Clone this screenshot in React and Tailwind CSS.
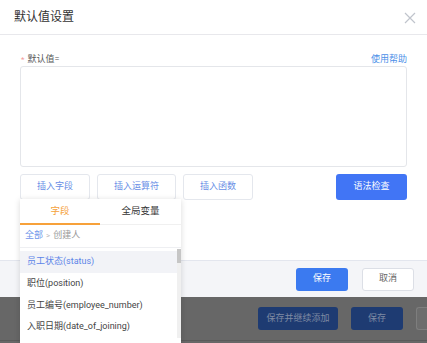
export default function App() {
  const font = { fontFamily: 'Roboto, "Noto Sans CJK SC", sans-serif' };
  return (
    <div className="relative w-[427px] h-[343px] overflow-hidden bg-white text-[9px] whitespace-nowrap" style={font}>
      {/* header */}
      <div className="h-[35px] flex items-center justify-between pl-[14px] pr-[11px] border-b border-[#e8e8ec]">
        <div className="text-[12px] text-[#333] leading-none">默认值设置</div>
        <svg width="12" height="12" viewBox="0 0 12 12" className="mt-[1px]">
          <path d="M1 1 L11 11 M11 1 L1 11" stroke="#c0c4cc" strokeWidth="1.2" />
        </svg>
      </div>
      {/* body */}
      <div className="h-[225px] px-[20px] pt-[16px]">
        <div className="flex items-end justify-between h-[13px] leading-none">
          <div className="flex items-center">
            <span className="text-[#f59a9a] text-[8px] mr-[3px] ml-[1px]">*</span>
            <span className="text-[#555]">默认值=</span>
          </div>
          <span className="text-[#4b8fe8]">使用帮助</span>
        </div>
        <div className="mt-[2px] h-[101px] border border-[#e4e6ea] rounded-[3px]"></div>
        <div className="mt-[7px] flex items-center">
          <div className="w-[70px] h-[26px] border border-[#e4e7ed] rounded-[3px] flex items-center justify-center text-[#6a8fe6]">插入字段</div>
          <div className="ml-[7px] w-[79px] h-[26px] border border-[#e4e7ed] rounded-[3px] flex items-center justify-center text-[#6a8fe6]">插入运算符</div>
          <div className="ml-[7px] w-[70px] h-[26px] border border-[#e4e7ed] rounded-[3px] flex items-center justify-center text-[#6a8fe6]">插入函数</div>
          <div className="ml-auto w-[71px] h-[26px] bg-[#4175f5] rounded-[3px] flex items-center justify-center text-white">语法检查</div>
        </div>
      </div>
      {/* footer */}
      <div className="h-[37px] bg-[#f4f5f8] border-t border-[#e3e6ee] flex items-center justify-end pr-[13px] gap-[14px]">
        <div className="w-[52px] h-[23px] bg-[#3b7af0] rounded-[3px] flex items-center justify-center text-white">保存</div>
        <div className="w-[52px] h-[23px] bg-white border border-[#dcdfe6] rounded-[3px] flex items-center justify-center text-[#666]">取消</div>
      </div>
      {/* overlay area */}
      <div className="h-[46px] bg-[#676767] flex flex-col">
        <div className="flex-1 flex items-center justify-end gap-[13px]">
          <div className="w-[80px] h-[23px] bg-[#1e3b72] rounded-[3px] flex items-center justify-center text-[#7e8aa3]">保存并继续添加</div>
          <div className="w-[52px] h-[23px] bg-[#1e3b72] rounded-[3px] flex items-center justify-center text-[#7e8aa3]">保存</div>
          <div className="w-[11px] h-[23px] bg-[#6d6d6d] border border-[#7e7e7e] rounded-l-[3px] border-r-0"></div>
        </div>
        <div className="h-[3px] border-t border-[#5a5a5a]"></div>
      </div>
      {/* dropdown */}
      <div className="absolute left-[20px] top-[199px] w-[161px] h-[150px] bg-white shadow-[0_1px_6px_rgba(0,0,0,0.15)]">
        <div className="h-[26px] flex border-b border-[#f0f0f0] relative">
          <div className="w-[80px] flex items-center justify-center text-[#f5a23a] text-[9.5px]">字段</div>
          <div className="flex-1 flex items-center justify-center text-[#333] text-[9.5px]">全局变量</div>
          <div className="absolute left-0 bottom-[-1px] w-[80px] h-[2px] bg-[#f7a13a]"></div>
        </div>
        <div className="h-[23px] flex items-center pl-[5px] border-b border-[#eeeff2]">
          <span className="text-[#6f95ea]">全部</span>
          <span className="text-[#bbb] mx-[3px] text-[8px]">&gt;</span>
          <span className="text-[#999]">创建人</span>
        </div>
        <div className="relative pt-[3px]">
          <div className="h-[22px] flex items-center pl-[7px] bg-[#f2f3f7] text-[#5b84e8] mr-[4px]">员工状态(status)</div>
          <div className="h-[22px] flex items-center pl-[7px] text-[#444]">职位(position)</div>
          <div className="h-[21px] flex items-center pl-[7px] text-[#444]">员工编号(employee_number)</div>
          <div className="h-[22px] flex items-center pl-[7px] text-[#444]">入职日期(date_of_joining)</div>
          <div className="absolute right-0 top-[1px] bottom-0 w-[4px] bg-[#f0f0f0]">
            <div className="h-[14px] bg-[#c6c6c6]"></div>
          </div>
        </div>
      </div>
    </div>
  );
}
